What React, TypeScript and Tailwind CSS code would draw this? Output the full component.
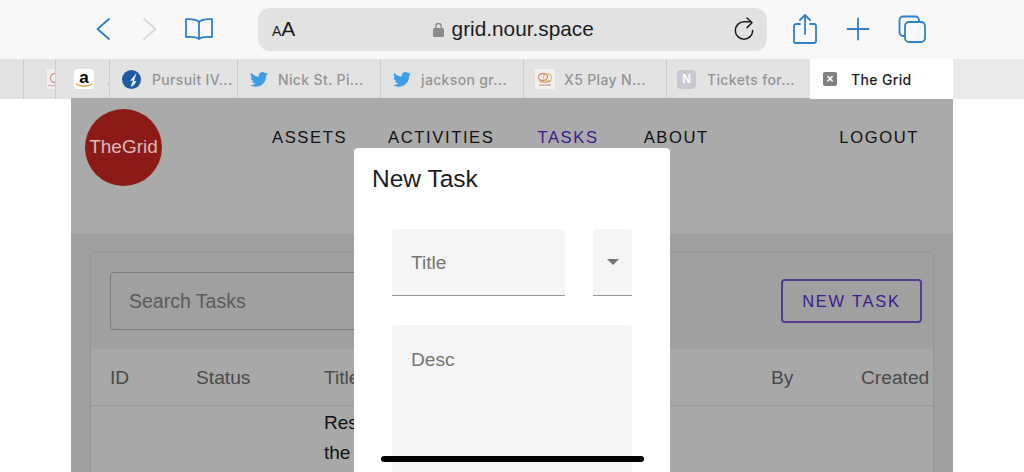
const sans = "font-['Liberation_Sans',Arial,sans-serif]";
const tabText = "whitespace-nowrap font-['Inter',sans-serif] text-[14px] font-medium tracking-[0.35px]";

function Chevron({ dir, color }: { dir: "left" | "right"; color: string }) {
  return (
    <svg width="16" height="24" viewBox="0 0 16 24" fill="none" stroke={color} strokeWidth="1.900" strokeLinecap="round" strokeLinejoin="round">
      <path d={dir === "left" ? "M14 2 2.500 12 14 22" : "M2 2l11.500 10L2 22"} />
    </svg>
  );
}

function BookIcon() {
  return (
    <svg width="30" height="24" viewBox="0 0 30 24" fill="none" stroke="#2f7fc9" strokeWidth="1.800" strokeLinejoin="round">
      <path d="M15 5C13 2.500 9 1.800 2 2.200V20c6.500-.5 10.500 0 13 2 2.500-2 6.500-2.500 13-2V2.200C21 1.800 17 2.500 15 5Z" />
      <path d="M15 5v17" />
    </svg>
  );
}

function LockIcon() {
  return (
    <svg width="11" height="15" viewBox="0 0 11 15" fill="none">
      <path d="M2.800 7V4.200a2.700 2.700 0 0 1 5.400 0V7" stroke="#8a8a8a" strokeWidth="1.300" />
      <rect x="0" y="6" width="11" height="9" rx="1.500" fill="#8a8a8a" />
    </svg>
  );
}

function ReloadIcon() {
  return (
    <svg width="20" height="24" viewBox="0 0 20 24" fill="none" stroke="#1c1c1c" strokeWidth="1.500" strokeLinecap="round" strokeLinejoin="round">
      <path d="M18.700 13.500A8.700 8.700 0 1 1 10 4.800h7" />
      <path d="M13 1l5 4.800-5 4.800" />
    </svg>
  );
}

function ShareIcon() {
  return (
    <svg width="26" height="32" viewBox="0 0 26 32" fill="none" stroke="#2f7fc9" strokeWidth="1.800" strokeLinecap="round" strokeLinejoin="round">
      <path d="M8 11H4a2 2 0 0 0-2 2v15a2 2 0 0 0 2 2h18a2 2 0 0 0 2-2V13a2 2 0 0 0-2-2h-4" />
      <path d="M13 21V2M8 7l5-5 5 5" />
    </svg>
  );
}

function PlusIcon() {
  return (
    <svg width="24" height="24" viewBox="0 0 24 24" fill="none" stroke="#2f7fc9" strokeWidth="1.800" strokeLinecap="round">
      <path d="M12 1.500v21M1.500 12h21" />
    </svg>
  );
}

function TabsIcon() {
  return (
    <svg width="28" height="28" viewBox="0 0 28 28" fill="none" stroke="#2f7fc9" strokeWidth="1.800">
      <rect x="7" y="7" width="20" height="20" rx="4" />
      <path d="M7 21H5a3.500 3.500 0 0 1-3.500-3.500V5A3.500 3.500 0 0 1 5 1.500h12.500A3.500 3.500 0 0 1 21 5v2" />
    </svg>
  );
}

function TwitterBird() {
  return (
    <svg width="18" height="15" viewBox="0 0 24 20" fill="#3c9fe6">
      <path d="M24 2.400a9.800 9.800 0 0 1-2.800.8A4.900 4.900 0 0 0 23.300.500a9.800 9.800 0 0 1-3.100 1.200 4.900 4.900 0 0 0-8.400 4.500A14 14 0 0 1 1.700.900a4.900 4.900 0 0 0 1.500 6.600A4.900 4.900 0 0 1 1 6.900v.1a4.900 4.900 0 0 0 3.900 4.800 4.900 4.900 0 0 1-2.200.1 4.900 4.900 0 0 0 4.600 3.400A9.900 9.900 0 0 1 0 17.300 14 14 0 0 0 7.500 19.500c9.100 0 14-7.500 14-14v-.6A10 10 0 0 0 24 2.400Z" />
    </svg>
  );
}

function X5Icon() {
  return (
    <svg width="20" height="20" viewBox="0 0 20 20">
      <rect width="20" height="20" fill="#f4f0ec" />
      <ellipse cx="8" cy="8" rx="4.500" ry="3.500" fill="none" stroke="#d9837f" strokeWidth="1.300" />
      <ellipse cx="12.500" cy="8.500" rx="4" ry="3.500" fill="none" stroke="#dcc07a" strokeWidth="1.300" />
      <path d="M4 11.500c3 2.500 8 2.500 12 0" fill="none" stroke="#d9a070" strokeWidth="1.200" />
      <rect x="4" y="15.500" width="12" height="1.200" fill="#c9a0a0" />
    </svg>
  );
}

function PursuitIcon() {
  return (
    <svg width="19" height="19" viewBox="0 0 19 19">
      <circle cx="9.500" cy="9.500" r="9.500" fill="#1f5aa0" />
      <path d="M14.500 3 8 11l3-.5L8.500 17c3-1 5-3 5.800-6l-2.300.3Z" fill="#e8eef5" />
    </svg>
  );
}

function AmazonIcon() {
  return (
    <span className="relative flex h-[20px] w-[20px] shrink-0 justify-center rounded-[3px] bg-white text-[17px] font-bold leading-[17px] text-black">
      a
      <svg className="absolute bottom-[1px] left-[1px]" width="18" height="5" viewBox="0 0 18 5" fill="none" stroke="#e8a33a" strokeWidth="1.300" strokeLinecap="round">
        <path d="M1 1c4 3 11 3 16 0" />
      </svg>
    </span>
  );
}

function ClippedFavicon() {
  return (
    <svg width="8" height="20" viewBox="0 0 8 20">
      <rect width="8" height="20" fill="#f4eeee" />
      <circle cx="8" cy="9" r="4.500" fill="none" stroke="#d08a8a" strokeWidth="1.300" />
      <rect x="1" y="16" width="7" height="1.200" fill="#d0b0b0" />
    </svg>
  );
}

type TabProps = { width: string; icon: React.ReactNode; title: string; gap?: string };

function Tab({ width, icon, title, gap = "gap-[9px]" }: TabProps) {
  return (
    <div className={`${width} ${gap} flex h-full shrink-0 items-center border-r border-[#cfcfcf] pl-[11px]`}>
      <span className="flex w-[20px] justify-center">{icon}</span>
      <span className={`${tabText} text-[#939393]`}>{title}</span>
    </div>
  );
}

export default function App() {
  return (
    <div className={`${sans} relative h-[472px] w-[1024px] overflow-hidden bg-white`}>
      {/* safari toolbar */}
      <div className="flex h-[59px] items-center bg-[#f8f8f8] pb-[1px]">
        <div className="ml-[95px] flex w-[163px] items-center">
          <Chevron dir="left" color="#2f7fc9" />
          <span className="ml-[31px]"><Chevron dir="right" color="#d8d8d8" /></span>
          <span className="ml-[26px]"><BookIcon /></span>
        </div>
        <div className="flex h-[43px] w-[509px] items-center rounded-[12px] bg-[#e2e2e2] pl-[14px] pr-[13px]">
          <span className="flex items-baseline text-[#1c1c1c]">
            <span className="text-[14px]">A</span>
            <span className="text-[21px]">A</span>
          </span>
          <div className="flex flex-1 items-center justify-center pr-[3px]">
            <LockIcon />
            <span className="ml-[8px] text-[20.800px] text-[#1c1c1c]">grid.nour.space</span>
          </div>
          <ReloadIcon />
        </div>
        <span className="ml-[25px]"><ShareIcon /></span>
        <span className="ml-[28px]"><PlusIcon /></span>
        <span className="ml-[28px]"><TabsIcon /></span>
      </div>

      {/* tab strip */}
      <div className="relative flex h-[40px] bg-[#e3e3e3]">
        <div className="h-full w-[24px] shrink-0 border-r border-[#cfcfcf]" />
        <div className="flex h-full w-[32px] shrink-0 items-center justify-end border-r border-[#cfcfcf]">
          <ClippedFavicon />
        </div>
        <div className="flex h-full w-[54px] shrink-0 items-center gap-[14px] overflow-hidden border-r border-[#cfcfcf] pl-[18px]">
          <AmazonIcon />
          <span className={`${tabText} text-[#939393]`}>A</span>
        </div>
        <Tab width="w-[128px]" gap="gap-[11px]" icon={<PursuitIcon />} title="Pursuit IV..." />
        <Tab width="w-[143px]" icon={<TwitterBird />} title="Nick St. Pi..." />
        <Tab width="w-[143px]" icon={<TwitterBird />} title="jackson gr..." />
        <Tab width="w-[143px]" icon={<X5Icon />} title="X5 Play N..." />
        <div className="flex h-full w-[143px] shrink-0 items-center gap-[11px] pl-[10px]">
          <span className="flex h-[19px] w-[19px] items-center justify-center rounded-[4px] bg-[#c8c8cf] text-[12px] font-bold text-white">N</span>
          <span className={`${tabText} text-[#939393]`}>Tickets for...</span>
        </div>
        <div className="relative z-10 flex h-full w-[143px] shrink-0 items-center gap-[14px] bg-white pl-[13px]">
          <span className="flex h-[14px] w-[14px] items-center justify-center rounded-[2px] bg-[#808080] text-[12px] font-bold leading-none text-white">×</span>
          <span className={`${tabText} text-[#1c1c1c]`}>The Grid</span>
        </div>
        <div className="flex-1 bg-[#e9e9e9]" />
        <div className="absolute left-[71px] top-[39px] h-[1px] w-[882px] bg-[#a4a4a4]" />
      </div>

      {/* dimmed page */}
      <div className="mx-[71px] h-[373px] w-[882px] overflow-hidden bg-[#a0a0a0]">
        <header className="flex h-[135px] items-start bg-[#aaaaaa] pl-[14px] pr-[34px] pt-[10px]">
          <div className="flex h-[77px] w-[77px] items-center justify-center rounded-full bg-[#8c1a16] text-[19px] text-[#d9bcbc]">
            TheGrid
          </div>
          <nav className="ml-[110px] mt-[19px] flex flex-1 text-[16.600px] leading-[20px] tracking-[1.600px] text-[#111111]">
            <span>ASSETS</span>
            <span className="ml-[41px]">ACTIVITIES</span>
            <span className="ml-[43px] text-[#3d1a8f]">TASKS</span>
            <span className="ml-[45px]">ABOUT</span>
            <span className="ml-auto">LOGOUT</span>
          </nav>
        </header>

        <section className="mx-[20px] mt-[19px] bg-[#a0a0a0] shadow-[0_0_2px_rgba(0,0,0,0.15)]">
          <div className="flex h-[96px] items-start justify-between pl-[19px] pr-[11px] pt-[19px]">
            <div className="flex h-[58px] w-[400px] items-center rounded-[4px] border border-[#7a7a7a] pl-[18px] pt-[2px] text-[19.500px] text-[#5a5a5a]">
              Search Tasks
            </div>
            <button
              type="button"
              className="mt-[7px] h-[44px] w-[141px] rounded-[4px] border-2 border-[#553b96] text-[16.500px] tracking-[1.750px] text-[#3d1a8f]"
            >
              NEW TASK
            </button>
          </div>
          <div className="flex h-[57px] items-center border-b border-[#999999] bg-[#a8a8a8] pl-[19px] pt-[3px] text-[19.200px] text-[#4a4a4a]">
            <span className="w-[86px]">ID</span>
            <span className="w-[128px]">Status</span>
            <span className="w-[447px]">Title</span>
            <span className="w-[90px]">By</span>
            <span>Created</span>
          </div>
          <div className="h-[100px] bg-[#a8a8a8] pl-[233px] pt-[2px] text-[19px] leading-[30px] text-[#111111]">
            <p>Research</p>
            <p>the</p>
          </div>
        </section>
      </div>

      {/* new task dialog */}
      <div className="absolute left-[354px] top-[148px] h-[340px] w-[316px] rounded-t-[4px] bg-white pl-[38px] pr-[38px]">
        <h2 className="-ml-[20px] mt-[16px] text-[24.500px] leading-[29px] text-[#1c1c1c]">New Task</h2>
        <div className="mt-[36px] flex justify-between">
          <div className="flex h-[67px] w-[173px] items-center rounded-t-[4px] border-b border-[#999999] bg-[#f5f5f5] pl-[19px] pt-[2px] text-[19.200px] text-[#767676]">
            Title
          </div>
          <div className="flex h-[67px] w-[39px] items-center justify-center rounded-t-[4px] border-b border-[#999999] bg-[#f5f5f5]">
            <span className="h-0 w-0 border-x-[6px] border-t-[6px] border-x-transparent border-t-[#757575]" />
          </div>
        </div>
        <div className="mt-[29px] h-[180px] w-[240px] rounded-t-[4px] bg-[#f5f5f5] pl-[19px] pt-[23px] text-[19.200px] leading-[24px] text-[#767676]">
          Desc
        </div>
      </div>

      {/* home indicator */}
      <div className="absolute left-[381px] top-[456px] h-[6px] w-[263px] rounded-full bg-black" />
    </div>
  );
}
